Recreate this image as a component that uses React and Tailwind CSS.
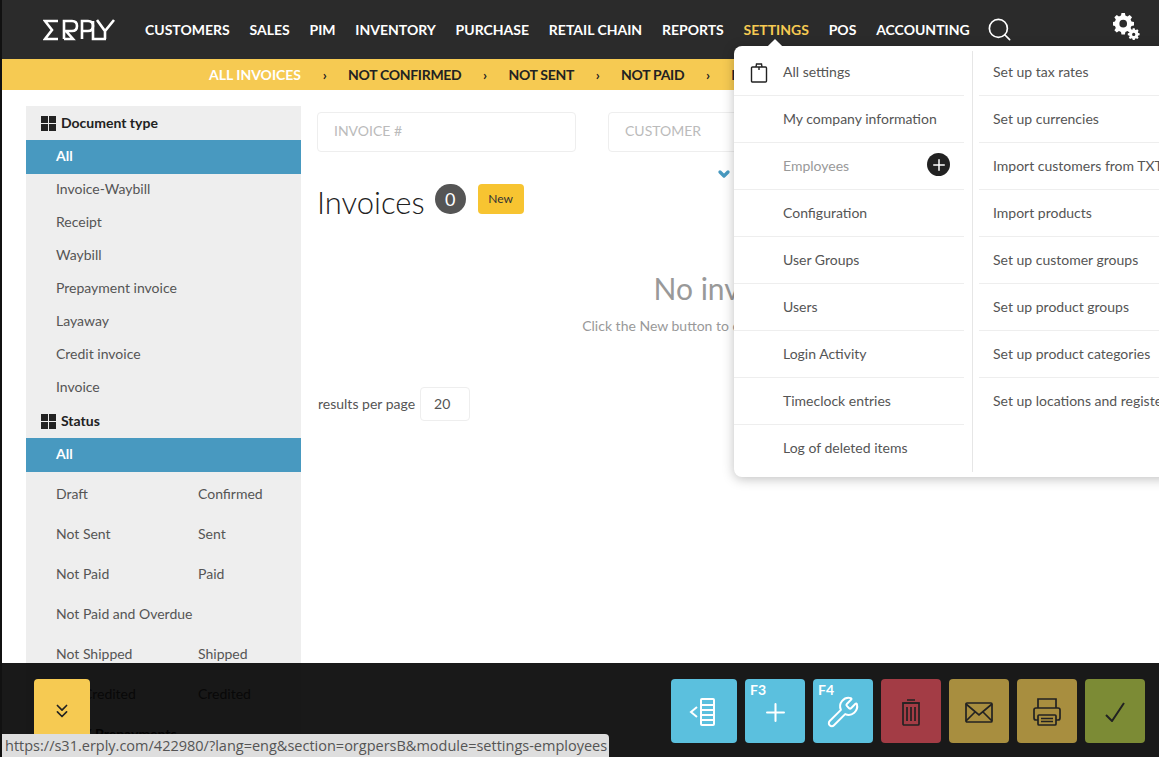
import { ChevronDown, ChevronsDown, Plus, Search, Wrench } from 'lucide-react';

const font = "font-['Lato','Noto_Sans',sans-serif]";

const navItems = ['CUSTOMERS', 'SALES', 'PIM', 'INVENTORY', 'PURCHASE', 'RETAIL CHAIN', 'REPORTS', 'SETTINGS', 'POS', 'ACCOUNTING'];
const crumbs = ['NOT CONFIRMED', 'NOT SENT', 'NOT PAID', 'NOT SHIPPED'];
const docTypes = ['Invoice-Waybill', 'Receipt', 'Waybill', 'Prepayment invoice', 'Layaway', 'Credit invoice', 'Invoice'];
const statuses = [
  ['Draft', 'Confirmed'],
  ['Not Sent', 'Sent'],
  ['Not Paid', 'Paid'],
  ['Not Paid and Overdue', ''],
  ['Not Shipped', 'Shipped'],
  ['Not Credited', 'Credited'],
];
const leftMenu = ['All settings', 'My company information', 'Employees', 'Configuration', 'User Groups', 'Users', 'Login Activity', 'Timeclock entries', 'Log of deleted items'];
const rightMenu = ['Set up tax rates', 'Set up currencies', 'Import customers from TXT', 'Import products', 'Set up customer groups', 'Set up product groups', 'Set up product categories', 'Set up locations and registers'];

function Logo() {
  return (
    <svg width="74" height="22" viewBox="0 0 74 22" fill="none" stroke="white" strokeWidth="2.6">
      <path d="M15 2H2l7 9-7 9h13" />
      <path d="M21 20V2h8q5 0 5 5t-5 5h-6l7 8h-9" />
      <path d="M39 20V2h6q5 0 5 5t-5 5h-6" />
      <path d="M50 2v18h13" />
      <path d="M54 1l8 11 9-11M62 12v8" />
    </svg>
  );
}

function Gears() {
  return (
    <svg width="28" height="28" viewBox="0 0 28 28" fill="white">
      <path fillRule="evenodd" d="M10 0h4l.6 3 2.4 1 2.6-1.7 2.8 2.8L20.700 7.700l1 2.300 3 .6v4l-3 .6-1 2.400 1.700 2.600-2.800 2.800-2.600-1.700-2.400 1-.6 3h-4l-.6-3-2.400-1-2.600 1.700-2.800-2.800 1.700-2.600-1-2.400-3-.6v-4l3-.6 1-2.300L1.600 5.100l2.800-2.800L7 4l2.400-1zM12 8a4.500 4.500 0 100 9 4.500 4.500 0 000-9z" transform="scale(.85)" />
      <path fillRule="evenodd" d="M21 15h2.400l.4 1.700 1.200.5 1.500-1 1.700 1.700-1 1.500.5 1.200 1.700.4v2.400l-1.700.4-.5 1.200 1 1.500-1.700 1.700-1.500-1-1.200.5-.4 1.700H21l-.4-1.700-1.200-.5-1.500 1-1.700-1.700 1-1.500-.5-1.200-1.700-.4v-2.400l1.700-.4.500-1.200-1-1.500 1.700-1.700 1.500 1 1.200-.5zm1.200 5.500a2 2 0 100 4 2 2 0 000-4z" transform="translate(2.500 3) scale(.82)" />
    </svg>
  );
}

function ListBack() {
  return (
    <svg width="30" height="30" viewBox="0 0 30 30" fill="none" stroke="white" strokeWidth="2">
      <path d="M8 10l-6 5 6 5" />
      <rect x="12" y="2" width="13" height="26" rx="1" />
      <path d="M12 8h13M12 13h13M12 18h13M12 23h13" />
    </svg>
  );
}

function TrashIcon() {
  return (
    <svg width="20" height="28" viewBox="0 0 20 28" fill="none" stroke="#222" strokeWidth="1.700">
      <path d="M6 2h8M1 5h18" />
      <rect x="2" y="5" width="16" height="22" rx="1" />
      <path d="M6 9v14M10 9v14M14 9v14" />
    </svg>
  );
}

function MailIcon() {
  return (
    <svg width="28" height="21" viewBox="0 0 28 21" fill="none" stroke="#222" strokeWidth="1.700">
      <rect x="1" y="1" width="26" height="19" rx="1" />
      <path d="M1 2l13 11L27 2M1 19l9-9M27 19l-9-9" />
    </svg>
  );
}

function PrinterIcon() {
  return (
    <svg width="28" height="28" viewBox="0 0 28 28" fill="none" stroke="#222" strokeWidth="1.700">
      <path d="M5 10V1h18v9" />
      <rect x="1" y="10" width="26" height="12" rx="2" />
      <rect x="5" y="17" width="18" height="10" rx="1" fill="#a88e3f" />
      <path d="M8 20.500h12M8 23.500h12" />
    </svg>
  );
}

function CheckIcon() {
  return (
    <svg width="20" height="20" viewBox="0 0 20 20" fill="none" stroke="#222" strokeWidth="2">
      <path d="M1 13l6 6L19 1" />
    </svg>
  );
}

function GridIcon() {
  return (
    <span className="grid h-[15px] w-[15px] grid-cols-2 gap-px">
      <span className="bg-[#222]" />
      <span className="bg-[#222]" />
      <span className="bg-[#222]" />
      <span className="bg-[#222]" />
    </span>
  );
}

function ActionButton({ color, label, width = 'w-[60px]', children }) {
  return (
    <button className={`relative flex h-[64px] items-center justify-center rounded ${width} ${color}`}>
      {label && <span className="absolute left-[5px] top-[3px] text-sm font-bold leading-4 text-white">{label}</span>}
      <span className="mt-[2px] flex">{children}</span>
    </button>
  );
}

export default function App() {
  return (
    <div className={`relative h-screen w-full overflow-hidden border-l-2 border-[#111] bg-white ${font}`}>
      <header className="flex h-[59px] items-center bg-[#2b2b2b] pl-[41px]">
        <Logo />
        <nav className="ml-[28px] flex gap-[19.800px] text-sm font-bold text-white">
          {navItems.map((item) => (
            <a key={item} className={item === 'SETTINGS' ? 'text-[#f6ca52]' : ''}>{item}</a>
          ))}
        </nav>
        <Search className="ml-[16px] text-white" size={27} strokeWidth={1.500} />
        <span className="ml-[100px] mt-[-6px]"><Gears /></span>
      </header>

      <div className="flex h-[31px] items-center whitespace-nowrap bg-[#f6ca52] pl-[207px] text-sm font-bold text-[#222]">
        <span className="text-white">ALL INVOICES</span>
        {crumbs.map((crumb) => (
          <span key={crumb} className="flex items-center tracking-[-0.3px]">
            <span className="w-[47px] text-center">›</span>
            {crumb}
          </span>
        ))}
      </div>

      <div className="flex pl-[24px] pt-[16px]">
        <aside className="w-[275px] shrink-0 bg-[#eee] text-sm text-[#555]">
          <h3 className="flex h-[34px] items-center gap-[5px] pl-[15px] font-bold text-[#222]"><GridIcon />Document type</h3>
          <div className="flex h-[34px] items-center bg-[#4899c0] pb-[2px] pl-[30px] font-bold text-white">All</div>
          {docTypes.map((type) => (
            <div key={type} className="flex h-[33px] items-center pb-[3px] pl-[30px]">{type}</div>
          ))}
          <h3 className="flex h-[33px] items-center gap-[5px] pb-px pl-[15px] font-bold text-[#222]"><GridIcon />Status</h3>
          <div className="flex h-[34px] items-center bg-[#4899c0] pb-[2px] pl-[30px] font-bold text-white">All</div>
          <div className="pt-[2px]">
            {statuses.map(([a, b]) => (
              <div key={a} className="grid h-[40px] grid-cols-[142px_1fr] items-center pl-[30px]">
                <span className="whitespace-nowrap">{a}</span>
                <span>{b}</span>
              </div>
            ))}
            <div className="flex h-[40px] items-center pl-[30px] font-bold text-[#222]">Bills / Prepayments</div>
          </div>
        </aside>

        <main className="ml-[16px] min-w-0 grow">
          <div className="flex gap-[32px] pt-[6px]">
            <div className="flex h-[40px] w-[259px] items-center rounded border border-[#eee] pb-[3px] pl-[16px] text-sm text-[#bbb]">INVOICE #</div>
            <div className="flex h-[40px] w-[259px] items-center rounded border border-[#eee] pb-[3px] pl-[16px] text-sm text-[#bbb]">CUSTOMER</div>
          </div>
          <div className="flex h-[14px] w-[415px] justify-end pt-[14px]">
            <ChevronDown className="text-[#4899c0]" size={16} strokeWidth={5} />
          </div>
          <div className="flex items-start pt-[18px]">
            <h1 className="mt-[-2px] text-[31px] font-light leading-10 text-[#222]">Invoices</h1>
            <span className="ml-[10px] flex h-[30px] w-[31px] items-center justify-center rounded-full bg-[#555] text-lg text-white">0</span>
            <button className="ml-[12px] h-[30px] w-[46px] rounded bg-[#f7c431] text-xs text-[#333]">New</button>
          </div>
          <div className="w-[826px] pt-[46px] text-center">
            <p className="text-[30px] leading-10 text-[#999]">No invoices</p>
            <p className="pt-[8px] text-sm text-[#999]">Click the New button to create your new invoice</p>
          </div>
          <div className="flex items-center gap-[5px] pl-px pt-[51px] text-sm text-[#555]">
            results per page
            <span className="flex h-[34px] w-[50px] items-center rounded border border-[#eee] pl-[13px]">20</span>
          </div>
        </main>
      </div>

      {/* settings dropdown */}
      <div className="absolute left-[732px] top-[46px] z-10 flex h-[431px] w-[480px] rounded-lg bg-white text-sm text-[#555] shadow-[0_2px_12px_rgba(0,0,0,0.25)]">
        <span className="absolute left-[36px] top-[-5px] h-[10px] w-[10px] rotate-45 bg-white" />
        <ul className="my-[5px] w-[239px] border-r border-[#e6e6e6] pr-[8px]">
          {leftMenu.map((item, i) => (
            <li key={item} className={`relative flex items-center pl-[49px] ${i === 0 ? 'h-[45px] pb-[2px]' : 'h-[47px]'} ${i < leftMenu.length - 1 ? 'border-b border-[#eee]' : 'pb-px'} ${item === 'Employees' ? 'text-[#999]' : ''}`}>
              {item === 'All settings' && (
                <svg className="absolute left-[16px] top-[12px]" width="18" height="20" viewBox="0 0 18 20" fill="none" stroke="#222" strokeWidth="1.400">
                  <rect x="1.500" y="4" width="15" height="15" rx="1" />
                  <path d="M6 4l.5-3h5l.5 3M9 4v3" />
                </svg>
              )}
              {item}
              {item === 'Employees' && (
                <span className="absolute right-[14px] top-[10px] flex h-[23px] w-[23px] items-center justify-center rounded-full bg-[#222]">
                  <Plus className="text-white" size={18} strokeWidth={2} />
                </span>
              )}
            </li>
          ))}
        </ul>
        <ul className="my-[5px] grow pl-[6px]">
          {rightMenu.map((item, i) => (
            <li key={item} className={`flex items-center whitespace-nowrap pl-[14px] ${i === 0 ? 'h-[45px] pb-[2px]' : 'h-[47px]'} ${i < rightMenu.length - 1 ? 'border-b border-[#eee]' : 'pb-px'}`}>{item}</li>
          ))}
        </ul>
      </div>

      {/* bottom action bar */}
      <footer className="absolute inset-x-0 bottom-0 z-20 flex h-[94px] items-start justify-between bg-black/90 pl-[32px] pr-[14px] pt-[16px]">
        <button className="flex h-[64px] w-[56px] items-start justify-center rounded bg-[#f6ca52] pt-[21px]">
          <ChevronsDown className="text-[#222]" size={22} strokeWidth={1.800} />
        </button>
        <div className="flex gap-[8px]">
          <ActionButton color="bg-[#5bc0de]" width="w-[66px]"><ListBack /></ActionButton>
          <ActionButton color="bg-[#5bc0de]" label="F3"><Plus className="text-white" size={29} strokeWidth={1.700} /></ActionButton>
          <ActionButton color="bg-[#5bc0de]" label="F4"><Wrench className="text-white" size={34} strokeWidth={1.400} /></ActionButton>
          <ActionButton color="bg-[#a33c45]"><TrashIcon /></ActionButton>
          <ActionButton color="bg-[#a88e3f]"><MailIcon /></ActionButton>
          <ActionButton color="bg-[#a88e3f]"><PrinterIcon /></ActionButton>
          <ActionButton color="bg-[#7c8b35]"><CheckIcon /></ActionButton>
        </div>
      </footer>

      {/* browser status bubble */}
      <div className="absolute bottom-0 left-0 z-30 flex h-[23px] items-center whitespace-nowrap rounded-tr bg-[#dedede] pl-[3px] pr-[2px] font-['Open_Sans',sans-serif] text-[14.500px] text-[#555]">
        https://s31.erply.com/422980/?lang=eng&amp;section=orgpersB&amp;module=settings-employees
      </div>
    </div>
  );
}
